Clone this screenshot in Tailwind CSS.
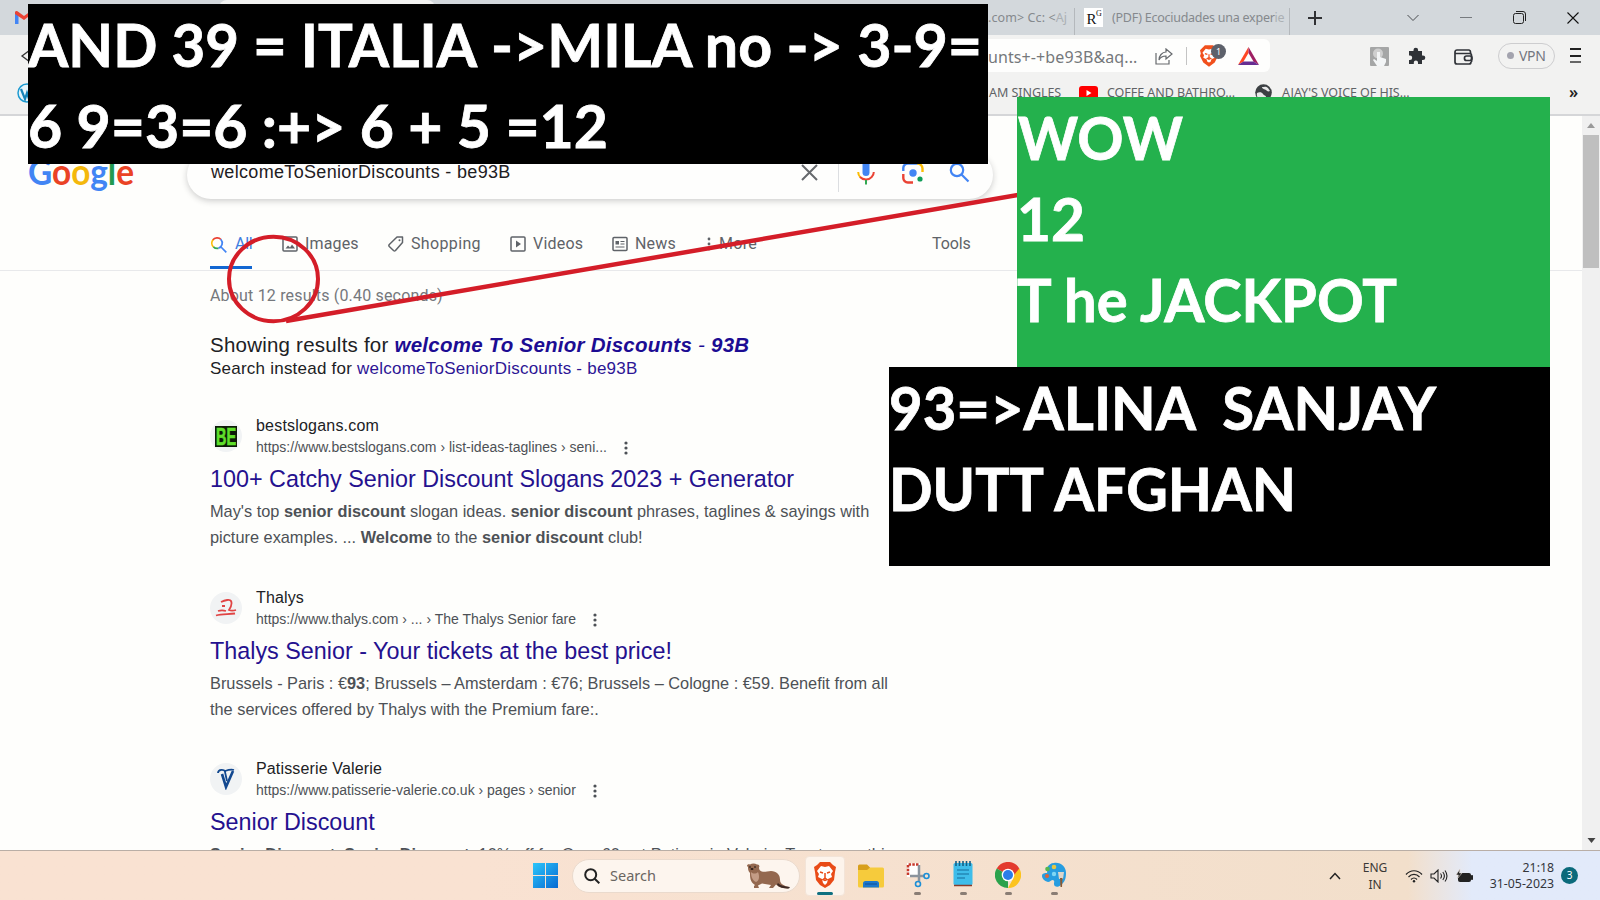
<!DOCTYPE html>
<html lang="en">
<head>
    <meta charset="UTF-8">
    <meta name="viewport" content="width=device-width, initial-scale=1.0">
    <title>welcomeToSeniorDiscounts - be93B - Google Search</title>
    <script src="https://cdn.jsdelivr.net/npm/@tailwindcss/browser@4"></script>
</head>

<body class="relative w-[1600px] h-[900px] overflow-hidden flex flex-col bg-[#fefefc] font-['Liberation_Sans',Arial,sans-serif] text-[#202124]">

    <!-- Tab strip -->
    <div class="relative h-[35px] shrink-0 bg-[#d3d8dc] flex items-center pl-[15px] font-['Noto_Sans',sans-serif] text-[#85898d] text-[12.5px] whitespace-nowrap">
        <svg class="w-[17px] h-[13px] shrink-0" viewBox="0 0 17 13"><path d="M0 1h3.500v12H0z" fill="#4285f4"/><path d="M0 1.500C0 0 2 -.5 3.500 1L9 5l5.500-4L17 3 9 9 0 3z" fill="#ea4335"/></svg>
        <div class="w-[216px] h-full ml-[187px] bg-[#f2f2f1] rounded-t-lg shrink-0"></div>
        <span class="ml-[553px] w-[84px] h-[20px] leading-[20px] shrink-0 tracking-[0.1px]">.com&gt; Cc: &lt;<span class="opacity-50">Aj</span></span>
        <div class="ml-[2px] w-px h-[27px] self-end bg-[#b4b8bc] shrink-0"></div>
        <svg class="ml-[9px] w-[19px] h-[19px] shrink-0" viewBox="0 0 19 19"><rect width="19" height="19" fill="#fff"/><text x="2.500" y="16" font-family="Liberation Serif" font-size="15" fill="#111">R</text><text x="12" y="8" font-family="Liberation Serif" font-size="8" fill="#111">G</text></svg>
        <span class="ml-[9px] w-[172px] leading-[20px] shrink-0 tracking-[-0.25px]">(PDF) Ecociudades una exper<span class="opacity-50">ie</span></span>
        <div class="ml-[5px] w-px h-[27px] self-end bg-[#b4b8bc] shrink-0"></div>
        <svg class="ml-[18px] w-[14px] h-[14px] shrink-0" viewBox="0 0 14 14" stroke="#303134" stroke-width="2"><path d="M7 0v14M0 7h14"/></svg>
        <svg class="ml-[84px] w-[14px] h-[8px] shrink-0" viewBox="0 0 14 8" fill="none" stroke="#4a4d50"><path d="M1.500 1L7 6.500 12.500 1"/></svg>
        <div class="ml-[40px] w-[12px] h-px bg-[#777b7f] shrink-0"></div>
        <svg class="ml-[41px] w-[13px] h-[13px] shrink-0" viewBox="0 0 13 13" fill="none" stroke="#222"><rect x=".5" y="2.500" width="10" height="10" rx="2"/><path d="M3 .5h7a2.500 2.500 0 0 1 2.500 2.500v7"/></svg>
        <svg class="ml-[41px] w-[12px] h-[12px] shrink-0" viewBox="0 0 12 12" stroke="#111" stroke-width="1.100"><path d="M.5.5l11 11M11.500.5l-11 11"/></svg>
    </div>

    <!-- Address bar -->
    <div class="h-[41px] shrink-0 bg-[#f2f2f1] flex items-center pl-[20px] font-['Noto_Sans',sans-serif] whitespace-nowrap">
        <svg class="w-[12px] h-[14px] shrink-0" viewBox="0 0 12 14" fill="none" stroke="#333" stroke-width="1.300"><path d="M10 1L2 7l8 6z"/></svg>
        <div class="ml-[160px] w-[1078px] h-[33px] rounded-md bg-[#fefefd] flex items-center shrink-0">
            <span class="ml-[796px] w-[154px] mt-[2px] text-[16px] leading-[20px] text-[#75787b] shrink-0 tracking-[0.1px]">unts+-+be93B&amp;aq...</span>
            <svg class="ml-[13px] mt-[2px] w-[18px] h-[17px] shrink-0" viewBox="0 0 18 17" fill="none" stroke="#66696d" stroke-width="1.200"><path d="M1 5v11h13v-4M11 1l6 5-6 5V8C8 8 5.500 9 4 12c0-4 3-8 7-8z"/></svg>
            <div class="ml-[13px] w-px h-[18px] bg-[#c4c4c4] shrink-0"></div>
            <div class="relative ml-[13px] mt-px w-[18px] h-[22px] shrink-0">
                <svg class="w-[18px] h-[22px]" viewBox="0 0 22 26"><path d="M6 0h10l3 3 3 3-1 4 1 3-4 8-7 5-7-5-4-8 1-3-1-4 3-3z" fill="#f1501d"/><path d="M7 4l4 1 4-1 4 5-2 3 1 3-4 2-1 3-2 1-2-1-1-3-4-2 1-3-2-3z" fill="#fff"/><path d="M6 10l3 1M16 10l-3 1M11 11v4l-2 1 2 1 2-1-2-1" stroke="#f1501d" fill="none" stroke-width="1.500"/></svg>
                <span class="absolute -top-[1px] left-[11px] w-[15px] h-[15px] rounded-full bg-[#5d616b] text-white text-[9px] leading-[15px] text-center">1</span>
            </div>
            <svg class="ml-[20px] mt-px w-[21px] h-[18px] shrink-0" viewBox="0 0 21 18"><path d="M10.500 0L0 18l5.500-3.500 5-8.500z" fill="#ff4724"/><path d="M10.500 0L21 18l-5.500-3.500-5-8.500z" fill="#9e1f63"/><path d="M0 18h21l-5.500-3.500h-10z" fill="#662d91"/></svg>
        </div>
        <svg class="ml-[100px] mt-[2px] w-[19px] h-[19px] shrink-0" viewBox="0 0 19 19"><rect width="19" height="19" rx="1" fill="#a5a6a6"/><circle cx="8" cy="6.500" r="5" fill="#cfcfcf"/><path d="M7 5h3v5l6 2v3l-2 4H7l-4-6 1-1 3 2z" fill="#f3f5f6"/></svg>
        <svg class="ml-[19px] mt-px w-[18px] h-[18px] shrink-0" viewBox="0 0 18 18"><path d="M1 4h4.500V3a2.300 2.300 0 0 1 4.600 0v1H14v4.500h1a2.300 2.300 0 0 1 0 4.600h-1V17H10v-1.500a2 2 0 0 0-4.200 0V17H1v-4h1a2.200 2.200 0 0 0 0-4.400H1z" fill="#2f3237"/></svg>
        <svg class="ml-[28px] mt-[2px] w-[19px] h-[16px] shrink-0" viewBox="0 0 19 16" fill="none" stroke="#303338" stroke-width="1.700"><path d="M16.500 5V3A2 2 0 0 0 15 1H3a2 2 0 0 0-2 2v10a2 2 0 0 0 2 2h12a2 2 0 0 0 2-2"/><path d="M1 4.500h14.500a2 2 0 0 1 2 2V13"/><rect x="10.500" y="7" width="7.500" height="4.500" rx="2"/></svg>
        <div class="ml-[25px] w-[57px] h-[26px] rounded-full border border-[#cdcdcf] flex items-center shrink-0 text-[14px] text-[#73767f]">
            <span class="ml-[8px] w-[7px] h-[7px] rounded-full bg-[#a3a3ae]"></span>
            <span class="ml-[5px] tracking-[-0.3px]">VPN</span>
        </div>
        <div class="ml-[15px] w-[11px] h-[15px] flex flex-col justify-between shrink-0">
            <div class="h-[2px] bg-[#222]"></div><div class="h-[2px] bg-[#222]"></div><div class="h-[2px] bg-[#666]"></div>
        </div>
    </div>

    <!-- Bookmarks bar -->
    <div class="h-[40px] shrink-0 bg-[#f2f2f1] border-b-2 border-[#d5d6d8] flex items-start pt-[7px] pl-[17px] font-['Noto_Sans',sans-serif] text-[12.5px] leading-[20px] text-[#606366] whitespace-nowrap">
        <svg class="w-[20px] h-[20px] shrink-0" viewBox="0 0 20 20"><circle cx="10" cy="10" r="9" fill="#e8f5fb" stroke="#1d9bd1" stroke-width="1.500"/><path d="M4 6l4 10 2-6 2 6 4-10" fill="none" stroke="#1583b8" stroke-width="2.200"/></svg>
        <span class="ml-[952px] w-[81px] shrink-0 tracking-[-0.05px]">AM SINGLES</span>
        <svg class="ml-[9px] mt-[3px] w-[19px] h-[14px] shrink-0" viewBox="0 0 19 14"><rect width="19" height="14" rx="3" fill="#f00"/><path d="M7.500 4v6l5-3z" fill="#fff"/></svg>
        <span class="ml-[9px] w-[147px] shrink-0 tracking-[-0.05px]">COFFE AND BATHRO...</span>
        <svg class="ml-px mt-[1px] w-[17px] h-[17px] shrink-0" viewBox="0 0 17 17"><circle cx="8.500" cy="8.500" r="8.300" fill="#3c4043"/><path d="M2 9c2-1 5-1 6 1s3 1 3 3-2 2-3 3C4 16 1 13 2 9zM7 3c2 0 4-1 6 1l2 3c-2 1-3 0-4-1S7 5 7 3z" fill="#e8e8e8"/></svg>
        <span class="ml-[10px] w-[287px] shrink-0 tracking-[-0.05px]">AJAY'S VOICE OF HIS...</span>
        <span class="text-[16px] leading-[18px] font-semibold text-[#222]">»</span>
    </div>

    <!-- Page -->
    <div class="h-[734px] shrink-0 flex overflow-hidden">
        <div class="grow flex flex-col">

            <!-- Search header -->
            <div class="h-[155px] shrink-0 border-b border-[#e8e9eb] flex flex-col justify-between">
                <div class="flex items-start pl-[28px] pt-[35px] whitespace-nowrap">
                    <svg class="w-[108px] h-[50px] shrink-0" viewBox="0 0 108 50">
                        <text x="0" y="34" textLength="106" lengthAdjust="spacingAndGlyphs" font-family="Lato" font-size="36" font-weight="700"><tspan fill="#4285f4">G</tspan><tspan fill="#ea4325">o</tspan><tspan fill="#f4b80c">o</tspan><tspan fill="#4285f4">g</tspan><tspan fill="#219a50">l</tspan><tspan fill="#ea4325">e</tspan></text>
                    </svg>
                    <div class="ml-[51px] w-[806px] h-[48px] rounded-full bg-[#fefefd] shadow-[0_2px_6px_rgba(32,33,36,0.22)] flex items-center shrink-0 text-[18px] text-[#1f2023]">
                        <span class="ml-[24px] w-[590px] mb-[5px] shrink-0 tracking-[0.33px]">welcomeToSeniorDiscounts - be93B</span>
                        <svg class="w-[17px] h-[17px] mb-[5px] shrink-0" viewBox="0 0 17 17" stroke="#66696d" stroke-width="2"><path d="M1 1l15 15M16 1L1 16"/></svg>
                        <div class="ml-[20px] w-px h-[34px] bg-[#dcdee1] shrink-0"></div>
                        <svg class="ml-[18px] w-[18px] h-[25px] mb-[5px] shrink-0" viewBox="0 0 18 25" fill="none"><rect x="5.500" y="0" width="7" height="16" rx="3.500" fill="#4285f4"/><path d="M1.200 12c0 2 .8 4 2.200 5.200" stroke="#fbbc04" stroke-width="2"/><path d="M3 17c3 3.300 9 3.300 11.500.2 1.400-1.200 2.300-3 2.300-5.200" stroke="#ea4335" stroke-width="2"/><path d="M9 20v4.500" stroke="#34a853" stroke-width="2"/></svg>
                        <svg class="ml-[27px] w-[22px] h-[22px] mb-[5px] shrink-0" viewBox="0 0 22 22" fill="none" stroke-width="2.400"><path d="M1.300 9V6a4.500 4.500 0 0 1 4.500-4.500h10" stroke="#4285f4"/><path d="M15 1.500a5 5 0 0 1 5.500 5V10" stroke="#fbbc04"/><path d="M1.300 12v4a4.500 4.500 0 0 0 4.500 4.500H11" stroke="#ea4335"/><circle cx="11" cy="11" r="3.700" fill="#4285f4"/><circle cx="18" cy="17" r="2.600" fill="#0f9d58"/></svg>
                        <svg class="ml-[25px] w-[21px] h-[21px] mb-[5px] shrink-0" viewBox="0 0 21 21" fill="none" stroke="#4285f4" stroke-width="2.200"><circle cx="8" cy="8" r="6.200"/><path d="M12.500 12.500l7 7"/></svg>
                    </div>
                </div>
                <div class="h-[41px] flex pl-[210px] font-['Roboto',sans-serif] text-[16px] leading-[30px] text-[#5f6368] whitespace-nowrap">
                    <div class="w-[42px] h-[40px] border-b-3 border-[#1267d2] flex shrink-0 text-[#3f7de0]">
                        <svg class="ml-[1px] mt-[8px] w-[16px] h-[16px] shrink-0" viewBox="0 0 16 16" fill="none" stroke-width="1.700"><path d="M1.700 3A5.500 5.500 0 0 1 10 2.500" stroke="#ea4335"/><path d="M2 2.700a5.500 5.500 0 0 0 .5 7.300" stroke="#fbbc04"/><path d="M2.400 9.800a5.500 5.500 0 0 0 5 1.500" stroke="#34a853"/><path d="M9.800 2.300a5.500 5.500 0 0 1-2.500 9M10 10l5.300 5.300" stroke="#4285f4"/></svg>
                        <span class="ml-[8px] tracking-[-0.3px]">All</span>
                    </div>
                    <svg class="ml-[30px] mt-[7px] w-[16px] h-[16px] shrink-0" viewBox="0 0 16 16" fill="none" stroke="#5f6368" stroke-width="1.500"><rect x="1" y="1" width="14" height="14" rx="1"/><path d="M3.500 12.500l2.500-3 2 2 2-3 3 4z" fill="#5f6368" stroke="none"/></svg>
                    <span class="ml-[7px] w-[83px] shrink-0 tracking-[0.15px]">Images</span>
                    <svg class="mt-[7px] w-[16px] h-[16px] shrink-0" viewBox="0 0 16 16" fill="none" stroke="#5f6368" stroke-width="1.500"><path d="M9 1h5.500v5.500L7.500 14.500a1.500 1.500 0 0 1-2 0L1.300 10.500a1.500 1.500 0 0 1 0-2z" stroke-linejoin="round"/><circle cx="11.500" cy="4.300" r="1" fill="#5f6368" stroke="none"/></svg>
                    <span class="ml-[7px] w-[99px] shrink-0 tracking-[0.35px]">Shopping</span>
                    <svg class="mt-[7px] w-[16px] h-[16px] shrink-0" viewBox="0 0 16 16" fill="none" stroke="#5f6368" stroke-width="1.500"><rect x="1" y="1" width="14" height="14" rx="1"/><path d="M6 4.500v7l5-3.500z" fill="#5f6368" stroke="none"/></svg>
                    <span class="ml-[7px] w-[79px] shrink-0 tracking-[0.2px]">Videos</span>
                    <svg class="mt-[7px] w-[16px] h-[16px] shrink-0" viewBox="0 0 16 16" fill="none" stroke="#5f6368" stroke-width="1.500"><rect x="1" y="1.500" width="14" height="13" rx="1"/><path d="M3.500 5H7v3.500H3.500z" fill="#5f6368" stroke="none"/><path d="M8.500 5.500h4M8.500 8h4M3.500 11h9" stroke-width="1.200"/></svg>
                    <span class="ml-[7px] w-[72px] shrink-0 tracking-[0.2px]">News</span>
                    <svg class="mt-[8px] w-[4px] h-[14px] shrink-0" viewBox="0 0 4 14" fill="#5f6368"><circle cx="2" cy="2" r="1.400"/><circle cx="2" cy="7" r="1.400"/><circle cx="2" cy="12" r="1.400"/></svg>
                    <span class="ml-[8px] w-[213px] shrink-0 tracking-[0.3px]">More</span>
                    <span class="tracking-[-0.1px]">Tools</span>
                </div>
            </div>

            <!-- Results -->
            <div class="pl-[210px] whitespace-nowrap">
                <p class="pt-[15px] h-[61px] leading-[20px] text-[16px] font-['Roboto',sans-serif] text-[#75787c] tracking-[0.18px]">About 12 results (0.40 seconds)</p>
                <p class="h-[26px] leading-[26px] text-[20.5px] tracking-[0.22px]">Showing results for <span class="font-bold italic text-[#1c0c93] tracking-[0.25px]">welcome To Senior Discounts <span class="font-normal">-</span> 93B</span></p>
                <p class="mt-px h-[20px] leading-[20px] text-[17px] tracking-[0.23px]">Search instead for <span class="text-[#2d1595]">welcomeToSeniorDiscounts - be93B</span></p>

                <div class="mt-[37px] h-[171px]">
                    <div class="flex h-[44px]">
                        <div class="mt-[4px] w-[32px] h-[32px] rounded-full bg-[#f1f3f4] flex items-center justify-center shrink-0">
                            <svg class="w-[22px] h-[21px]" viewBox="0 0 22 21"><rect width="22" height="21" fill="#0d1a08"/><text x="1" y="18.500" textLength="20" lengthAdjust="spacingAndGlyphs" font-family="Liberation Sans" font-weight="bold" font-size="23" fill="#5fe02b" stroke="#5fe02b" stroke-width=".7">BE</text></svg>
                        </div>
                        <div class="ml-[14px]">
                            <p class="leading-[20px] text-[16px] tracking-[0.2px]">bestslogans.com</p>
                            <div class="flex items-center h-[23px] text-[14px] text-[#4d5156]">
                                <span>https://www.bestslogans.com › list-ideas-taglines › seni...</span>
                                <svg class="ml-[17px] w-[4px] h-[14px]" viewBox="0 0 4 14" fill="#4d5156"><circle cx="2" cy="2" r="1.600"/><circle cx="2" cy="7" r="1.600"/><circle cx="2" cy="12" r="1.600"/></svg>
                            </div>
                        </div>
                    </div>
                    <h3 class="mt-[4px] h-[32px] leading-[31px] text-[23.35px] text-[#25118f]">100+ Catchy Senior Discount Slogans 2023 + Generator</h3>
                    <p class="mt-[2px] leading-[26px] text-[16.33px] text-[#4d5156]">May's top <b>senior discount</b> slogan ideas. <b>senior discount</b> phrases, taglines &amp; sayings with<br>picture examples. ... <b>Welcome</b> to the <b>senior discount</b> club!</p>
                </div>

                <div class="mt-px h-[171px]">
                    <div class="flex h-[44px]">
                        <div class="mt-[4px] w-[32px] h-[32px] rounded-full bg-[#f1f3f4] flex items-center justify-center shrink-0">
                            <svg class="w-[22px] h-[18px]" viewBox="0 0 22 18" fill="none" stroke="#e04444" stroke-width="1.800"><path d="M6 3C10 1 15 0 16 2s0 6-2 9c2 1 4 1 7 0M7 7h3M3 12c3-1 5-1 8 0M1 16.500c6-2 12-1 19-2"/></svg>
                        </div>
                        <div class="ml-[14px]">
                            <p class="leading-[20px] text-[16px] tracking-[0.15px]">Thalys</p>
                            <div class="flex items-center h-[23px] text-[14px] text-[#4d5156]">
                                <span>https://www.thalys.com › ... › The Thalys Senior fare</span>
                                <svg class="ml-[17px] w-[4px] h-[14px]" viewBox="0 0 4 14" fill="#4d5156"><circle cx="2" cy="2" r="1.600"/><circle cx="2" cy="7" r="1.600"/><circle cx="2" cy="12" r="1.600"/></svg>
                            </div>
                        </div>
                    </div>
                    <h3 class="mt-[4px] h-[32px] leading-[31px] text-[23.35px] text-[#25118f]">Thalys Senior - Your tickets at the best price!</h3>
                    <p class="mt-[2px] leading-[26px] text-[16.33px] text-[#4d5156]">Brussels - Paris : €<b>93</b>; Brussels – Amsterdam : €76; Brussels – Cologne : €59. Benefit from all<br>the services offered by Thalys with the Premium fare:.</p>
                </div>

                <div class="h-[171px]">
                    <div class="flex h-[44px]">
                        <div class="mt-[4px] w-[32px] h-[32px] rounded-full bg-[#f1f3f4] flex items-center justify-center shrink-0">
                            <svg class="w-[20px] h-[22px]" viewBox="0 0 20 22" fill="none" stroke="#12488f" stroke-width="2.600"><path d="M6 6l4 13 7-16" /><path d="M2 5c0-4 7-4 7-1l2 9M9 3c3-1 6-2 9-1" stroke-width="1.800"/></svg>
                        </div>
                        <div class="ml-[14px]">
                            <p class="leading-[20px] text-[16px] tracking-[0.15px]">Patisserie Valerie</p>
                            <div class="flex items-center h-[23px] text-[14px] text-[#4d5156]">
                                <span>https://www.patisserie-valerie.co.uk › pages › senior</span>
                                <svg class="ml-[17px] w-[4px] h-[14px]" viewBox="0 0 4 14" fill="#4d5156"><circle cx="2" cy="2" r="1.600"/><circle cx="2" cy="7" r="1.600"/><circle cx="2" cy="12" r="1.600"/></svg>
                            </div>
                        </div>
                    </div>
                    <h3 class="mt-[4px] h-[32px] leading-[31px] text-[23.35px] text-[#25118f]">Senior Discount</h3>
                    <p class="mt-[2px] leading-[26px] text-[16.33px] text-[#4d5156]"><b>Senior Discount</b>. <b>Senior Discount</b>. 10% off for Over 60s at Patisserie Valerie. Treat something</p>
                </div>
            </div>
        </div>

        <!-- Scrollbar -->
        <div class="w-[18px] shrink-0 bg-[#f0f0f0] flex flex-col items-center">
            <svg class="mt-[7px] w-[8px] h-[5px] shrink-0" viewBox="0 0 8 5"><path d="M0 5l4-5 4 5z" fill="#999"/></svg>
            <div class="mt-[7px] w-[16px] h-[133px] bg-[#bfbfbf] shrink-0"></div>
            <svg class="mt-auto mb-[7px] w-[9px] h-[5px] shrink-0" viewBox="0 0 8 5"><path d="M0 0l4 5 4-5z" fill="#444"/></svg>
        </div>
    </div>

    <!-- Taskbar -->
    <div class="h-[50px] shrink-0 border-t border-[#b9aea6] bg-linear-to-r from-[#f9e2d2] from-30% via-[#f2dfcb] via-88% to-[#e2eafa] to-92% flex items-center pl-[533px] font-['Noto_Sans',sans-serif] whitespace-nowrap">
        <svg class="w-[25px] h-[25px] shrink-0" viewBox="0 0 25 25"><defs><linearGradient id="win" x1="0" y1="0" x2="1" y2="1"><stop stop-color="#2cc6fb"/><stop offset="1" stop-color="#0669d2"/></linearGradient></defs><path d="M0 0h12v12H0zM13 0h12v12H13zM0 13h12v12H0zM13 13h12v12H13z" fill="url(#win)"/></svg>
        <div class="ml-[14px] w-[228px] h-[34px] rounded-full bg-[#fdf5ee] border border-[#eadacd] flex items-center shrink-0">
            <svg class="ml-[11px] w-[16px] h-[16px] shrink-0" viewBox="0 0 16 16" fill="none" stroke="#222" stroke-width="2"><circle cx="6.700" cy="6.700" r="5.500"/><path d="M10.700 10.700L15.300 15.300"/></svg>
            <span class="ml-[10px] w-[136px] text-[14.5px] text-[#6a6561] shrink-0">Search</span>
            <!-- otter -->
            <svg class="w-[44px] h-[26px] shrink-0" viewBox="0 0 44 26"><path d="M1 3C1 1 3 1 4 1.500 6 0 9 0 11 1.500 13 1 14 3 13 4.500c0 4 4 5 8 4 8-2 13 2 13 8 0 5 4 6 9 7.500l-1 1.500c-5 0-9-1-12-4l-3 3.500h-4l2-3-9-1.500-4 2 1 2.500H8v-2l1-1C4 19 4 14 4 10 2 8 2 6 2 4z" fill="#94684f"/><path d="M5 9c2 2 5 2 7 0 2 5 1 9-2 10-4-2-5-6-5-10z" fill="#c49c86"/><path d="M32 20c3 3 6 3 12 4l-1 1.500c-5 0-10-1-12-4z" fill="#3d2a25"/><circle cx="4" cy="4" r=".8" fill="#111"/><circle cx="9" cy="4" r=".8" fill="#111"/><ellipse cx="6" cy="6" rx="1.500" ry="1" fill="#2c1c18"/></svg>
        </div>
        <div class="ml-[5px] w-[40px] h-[40px] rounded-[4px] bg-[#fdf4ec] border border-[#f3e4d8] flex flex-col items-center shrink-0">
            <svg class="mt-[5px] w-[22px] h-[26px] shrink-0" viewBox="0 0 22 26"><path d="M6 0h10l3 3 3 2-1 5-1 8-4 5-5 3-5-3-4-5-1-8-1-5 3-2z" fill="#e94b17"/><path d="M7 4l4 1 4-1 4 5-2 3 1 3-4 2-1 4-2 2-2-2-1-4-4-2 1-3-2-3z" fill="#fff"/><path d="M6 10l3 1M16 10l-3 1M11 11v5l-2 1.500 2 1 2-1-2-1.500" stroke="#e94b17" fill="none" stroke-width="1.500"/></svg>
            <div class="mt-[4px] w-[16px] h-[3px] rounded-full bg-[#0f7080]"></div>
        </div>
        <svg class="ml-[13px] w-[26px] h-[24px] shrink-0" viewBox="0 0 26 24"><path d="M0 2a1.500 1.500 0 0 1 1.500-1.500H9l3 3v4H0z" fill="#d89f1c"/><path d="M0 6h9l3-2.500h12.500A1.500 1.500 0 0 1 26 5v17a1.500 1.500 0 0 1-1.500 1.500h-23A1.500 1.500 0 0 1 0 22z" fill="#f6cb3c"/><path d="M5 23.500v-4a2.500 2.500 0 0 1 2.500-2.500h11a2.500 2.500 0 0 1 2.500 2.500v4z" fill="#1b78cc"/><path d="M7 20h12" stroke="#124f93"/></svg>
        <div class="ml-[20px] w-[26px] h-[40px] flex flex-col items-center shrink-0">
            <svg class="mt-[6px] w-[26px] h-[26px] shrink-0" viewBox="0 0 26 26" fill="none"><path d="M3 1h13v14H3z" fill="#fff"/><path d="M4 13V2.500h11" stroke="#c8392b" stroke-width="2.500" stroke-dasharray="2.500 1.200"/><path d="M15 3v16M6 14h14" stroke="#8b949d" stroke-width="2.500"/><circle cx="22.500" cy="14" r="2.500" stroke="#1e8fd6" stroke-width="1.600"/><circle cx="14" cy="22" r="2.500" stroke="#1e8fd6" stroke-width="1.600"/></svg>
            <div class="mt-[4px] w-[7px] h-[3px] rounded-full bg-[#8a7d74]"></div>
        </div>
        <div class="ml-[23px] w-[20px] h-[40px] flex flex-col items-center shrink-0">
            <svg class="mt-[5px] w-[20px] h-[26px] shrink-0" viewBox="0 0 20 26"><rect x=".5" y="2" width="19" height="22" rx="1.500" fill="#3fbdea"/><path d="M3 0v5M6.500 0v5M10 0v5M13.500 0v5M17 0v5" stroke="#155f86" stroke-width="1.600"/><path d="M4 9h12M4 13h12M4 17h8" stroke="#176e9c" stroke-width="1.200"/><path d="M1 24.500h18" stroke="#8a3c2a" stroke-width="1.500"/></svg>
            <div class="mt-[5px] w-[7px] h-[3px] rounded-full bg-[#8a7d74]"></div>
        </div>
        <div class="ml-[22px] w-[26px] h-[40px] flex flex-col items-center shrink-0">
            <svg class="mt-[6px] w-[26px] h-[26px] shrink-0" viewBox="0 0 26 26"><path d="M13 13L1.700 6.500A13 13 0 0 1 24.300 6.500z" fill="#e33b2e"/><path d="M13 13L1.700 6.500A13 13 0 0 0 13 26z" fill="#2ba24c"/><path d="M13 13h0L24.300 6.500A13 13 0 0 1 13 26l5.500-10z" fill="#fcc31e"/><path d="M13 6.500h11.300L19 13z" fill="#e33b2e"/><circle cx="13" cy="13" r="6.300" fill="#fff"/><circle cx="13" cy="13" r="5" fill="#2b7de9"/></svg>
            <div class="mt-[4px] w-[7px] h-[3px] rounded-full bg-[#8a7d74]"></div>
        </div>
        <div class="ml-[20px] w-[26px] h-[40px] flex flex-col items-center shrink-0">
            <svg class="mt-[6px] w-[26px] h-[26px] shrink-0" viewBox="0 0 26 26"><path d="M13 1C20 0 25 5 25 11c0 5-1 9-5 12-3 3-7 2-7-1 0-2 1-3-1-4-2 0-3 2-5 2-4-1-6-4-6-6 0-3 3-3 5-3 1-1-1-3 0-5 1-3 4-5 7-5z" fill="#279de0"/><circle cx="6.500" cy="7" r="2.300" fill="#56b650"/><circle cx="13" cy="5" r="2.300" fill="#e6c744"/><circle cx="6" cy="14" r="2" fill="#d8643a"/><circle cx="13" cy="12" r="2.200" fill="#7fd7f4"/><path d="M17 10h6l-1 7h-4z" fill="#dcd5ca"/><path d="M19 16h2.500l-.5 9h-1.500z" fill="#8a5a34"/></svg>
            <div class="mt-[4px] w-[7px] h-[3px] rounded-full bg-[#8a7d74]"></div>
        </div>
        <svg class="ml-[262px] w-[12px] h-[8px] shrink-0" viewBox="0 0 12 8" fill="none" stroke="#222" stroke-width="1.500"><path d="M1 7l5-5.500L11 7"/></svg>
        <div class="ml-[21px] w-[26px] text-[12px] leading-[17px] text-center text-[#3a3836] shrink-0">ENG<br>IN</div>
        <svg class="ml-[17px] w-[18px] h-[14px] shrink-0" viewBox="0 0 18 14" fill="none" stroke="#222" stroke-width="1.200"><path d="M1 5.500c4.500-5 11.500-5 16 0M3.500 8c3.200-3.500 7.800-3.500 11 0M6 10.500c1.800-2 4.200-2 6 0"/><circle cx="9" cy="12.300" r="1.200" fill="#222" stroke="none"/></svg>
        <svg class="ml-[7px] w-[18px] h-[14px] shrink-0" viewBox="0 0 18 14" fill="none" stroke="#222" stroke-width="1.100"><path d="M1 5h3l4-4v12L4 9H1zM10.500 4.500c1.200 1.500 1.200 3.500 0 5M12.800 3c2 2.500 2 5.500 0 8M15 1.500c2.500 3.500 2.500 7.500 0 11"/></svg>
        <svg class="ml-[8px] w-[18px] h-[14px] shrink-0" viewBox="0 0 18 14"><rect x="2" y="4" width="13" height="9" rx="2" fill="#222"/><path d="M15.500 6.500h1v4h-1z" fill="#222" stroke="#222"/><path d="M4 0L0 6h2.500L1.500 9.500 6 4H3.500z" fill="#222" stroke="#eadfd8" stroke-width=".6"/></svg>
        <div class="ml-[13px] w-[67px] text-[12.3px] leading-[16px] text-right text-[#33353a] shrink-0">21:18<br>31-05-2023</div>
        <span class="ml-[7px] w-[17px] h-[17px] rounded-full bg-[#0b6a7b] text-white text-[10px] leading-[17px] text-center shrink-0">3</span>
    </div>

    <!-- Marker strokes -->
    <svg class="absolute top-0 left-0 w-[1600px] h-[900px]" viewBox="0 0 1600 900" fill="none" stroke="#d41d28" stroke-width="4.500">
        <ellipse cx="273.500" cy="279" rx="44.500" ry="42.300" stroke-width="4"/>
        <path d="M286 321L1018 195"/>
    </svg>

    <!-- Notes on top of the page -->
    <svg class="absolute top-[4px] left-[28px] w-[960px] h-[160px] bg-black font-['Lato',sans-serif] font-bold text-[59.5px]" viewBox="28 4 960 160" fill="#fff" stroke="#fff" stroke-width=".8">
        <text x="28" y="67" textLength="449" lengthAdjust="spacingAndGlyphs">AND 39 = ITALIA</text>
        <text x="491" y="67" textLength="491" lengthAdjust="spacingAndGlyphs">-&gt;MILA no -&gt; 3-9=</text>
        <text x="28" y="148" textLength="580" lengthAdjust="spacingAndGlyphs">6 9=3=6 :+&gt; 6 + 5 =12</text>
    </svg>
    <svg class="absolute top-[97px] left-[1017px] w-[533px] h-[270px] bg-[#24b14d] font-['Lato',sans-serif] font-bold text-[59.5px]" viewBox="1017 97 533 270" fill="#fff" stroke="#fff" stroke-width=".8">
        <text x="1018" y="160" textLength="165" lengthAdjust="spacingAndGlyphs">WOW</text>
        <text x="1017" y="241" textLength="68" lengthAdjust="spacingAndGlyphs">12</text>
        <text x="1017" y="322" textLength="380" lengthAdjust="spacingAndGlyphs">T he JACKPOT</text>
    </svg>
    <svg class="absolute top-[367px] left-[889px] w-[661px] h-[199px] bg-black font-['Lato',sans-serif] font-bold text-[59.5px]" viewBox="889 367 661 199" fill="#fff" stroke="#fff" stroke-width=".8">
        <text x="889" y="430" textLength="547" lengthAdjust="spacingAndGlyphs" xml:space="preserve">93=&gt;ALINA  SANJAY</text>
        <text x="889" y="511" textLength="407" lengthAdjust="spacingAndGlyphs">DUTT AFGHAN</text>
    </svg>

</body>
</html>
